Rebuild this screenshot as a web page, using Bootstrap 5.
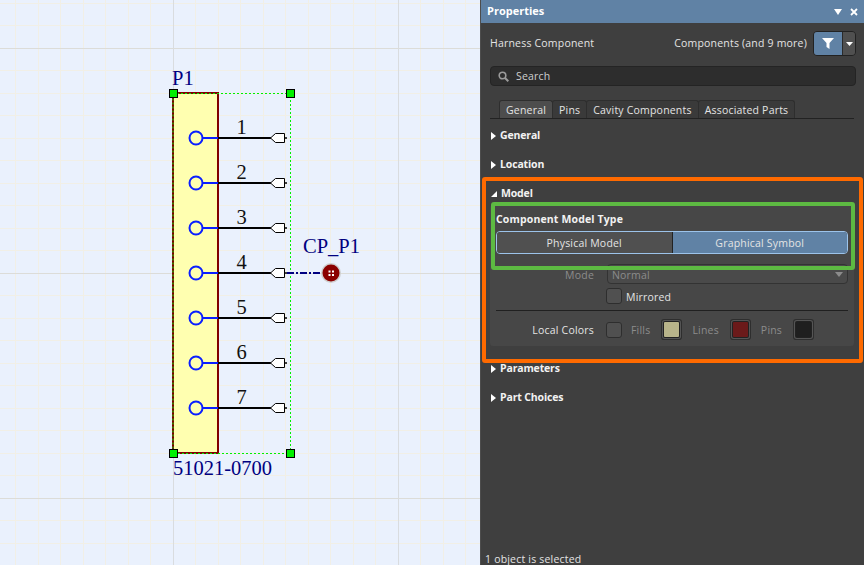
<!DOCTYPE html>
<html lang="en">
<head>
<meta charset="UTF-8">
<meta name="viewport" content="width=device-width, initial-scale=1.0">
<title>Properties</title>
<link href="https://cdn.jsdelivr.net/npm/bootstrap@5.3.0/dist/css/bootstrap.min.css" rel="stylesheet">
<style>
html, body { height: 565px; overflow: hidden; }
body { font-family: "Open Sans", "Noto Sans", sans-serif; font-size: 10.5px; letter-spacing: .2px; background: #eaf1fd; }
.sheet { width: 480px; height: 565px; flex: none; background-color: #eaf1fd;
  background-image:
    linear-gradient(90deg, #d9dcdf 1px, transparent 1px),
    linear-gradient(180deg, #dcdcd8 1px, transparent 1px),
    linear-gradient(90deg, #f1efe6 1px, transparent 1px, transparent 22px, #f1efe6 22px, #f1efe6 23px, transparent 23px),
    linear-gradient(180deg, #f1efe6 1px, transparent 1px, transparent 22px, #f1efe6 22px, #f1efe6 23px, transparent 23px);
  background-size: 225px 225px, 225px 225px, 45px 45px, 45px 45px;
  background-position: 173px 0, 0 48px, 173px 0, 0 48px; }
.sheet svg { display: block; }
.sch { font-family: "Liberation Serif", serif; letter-spacing: 0; }
.panel { width: 384px; height: 565px; flex: none; background: #3f3f3f; color: #e4e4e4; border-left: 1px solid #4d4d4d; position: relative; }
.panel-head { height: 23px; background: #6082a5; color: #fff; font-weight: 700; font-size: 11px; letter-spacing: 0; padding: 0 6px; }
.panel-body { padding: 0 8px 0 9px; }
.top-row { margin-top: 8px; }
.top-label { padding-top: 1px; }
.filter-wrap { gap: 6px; }
.filter-btn { width: 43px; height: 25px; border: 1px solid #222; border-radius: 4px; overflow: hidden; }
.filter-main { width: 28px; background: #6082a5; }
.filter-drop { flex: 1; background: #505050; border-left: 1px solid #2a2a2a; }
.search-box { height: 20px; margin-top: 10px; background: #2d2d2d; border: 1px solid #242424; border-radius: 4px; padding: 1px 0 0 7px; color: #cfcfcf; gap: 7px; }
.tabs-row { margin-top: 14px; margin-right: 2px; height: 19px; border-bottom: 1px solid #222; padding-left: 9px; }
.tab-item { padding: 0 6px; height: 18px; line-height: 18px; background: #3a3a3a; border: 1px solid #2e2e2e; border-bottom: 0; border-radius: 3px 3px 0 0; }
.tab-item + .tab-item { margin-left: -1px; }
.tab-item.on { background: #4d4d4d; }
.sect { font-weight: 700; letter-spacing: -.15px; color: #f2f2f2; height: 29px; padding-left: 1px; }
.sect-first { margin-top: 2px; }
.sect-open { height: 26px; padding-top: 4px; }
.model-box { background: #474747; border-radius: 3px; height: 141px; padding: 6px 6px 0; margin: 0 2px 8px 0; }
.box-title { height: 16px; line-height: 16px; font-weight: 700; color: #f2f2f2; letter-spacing: .15px; }
.fld-label { width: 98px; margin-right: 12px; text-align: right; color: #8c8c8c; flex: none; }
.fld-label.lit { color: #e4e4e4; }
.switcher { height: 23px; margin-top: 4px; line-height: 23px; border: 1px solid #9cc3ea; border-radius: 4px; overflow: hidden; }
.switcher div { flex: 1; }
.sw-off { background: #505050; border-right: 1px solid #222; }
.sw-on { background: #6082a5; }
.mode-row { margin-top: 10px; height: 20px; }
.mode-row .fld-label, .mirror-row span:last-child, .combo span { padding-top: 4px; }
.combo { flex: 1; height: 20px; margin-left: 1px; background: #4a4a4a; border: 1px solid #333; border-radius: 4px; color: #8c8c8c; padding: 0 4px; }
.mirror-row { margin-top: 4px; height: 16px; }
.chk { width: 16px; height: 16px; background: #505050; border: 1px solid #2e2e2e; border-radius: 3px; flex: none; }
.mirror-row .chk { margin-right: 4px; }
.swatch { width: 15px; height: 15px; margin: 3px; border-radius: 1px; box-shadow: 0 0 0 1px #222, 0 0 0 2px #555, 0 0 0 3px #2e2e2e; flex: none; }
.bg-fills { background: #b8b48a; }
.bg-lines { background: #6b1a1a; }
.bg-pins { background: #1f1f1f; }
.color-row { margin-top: 8px; height: 21px; }
.color-row .fld-label, .color-row .dim { padding-top: 3px; }
.color-row .dim { margin: 0 11px 0 9px; }
.color-row .dim.next { margin-left: 10px; }
.rule-line { height: 1px; background: #202020; margin-top: 6px; }
.dim { color: #8c8c8c; }
.mark-orange { position: absolute; left: 1px; top: 177px; width: 381px; height: 186px; border: 4px solid #ff6a00; border-radius: 3px; }
.mark-green { position: absolute; left: 10px; top: 202px; width: 364px; height: 68px; border: 4px solid #5dba42; border-radius: 3px; }
.status-text { position: absolute; left: 4px; bottom: -3px; }
</style>
</head>
<body class="d-flex">
<div class="sheet">
<svg width="480" height="565" viewBox="0 0 480 565">
  <rect x="173" y="93" width="45" height="360" fill="#ffffb0" stroke="#800000" stroke-width="2"/>
  <path d="M173 93.500H290.500V453.500H173Z" fill="none" stroke="#00f000" stroke-dasharray="2 2"/>
  <g id="pins"></g>
  <path d="M287 273H325" stroke="#000080" stroke-width="2" stroke-dasharray="7 2 2 2"/>
  <circle cx="331" cy="273" r="10" fill="#cfcfcf"/>
  <circle cx="331" cy="273" r="8.500" fill="#8b0000"/>
  <path d="M328.500 270.500h2v2h-2zM332 270.500h2v2h-2zM328.500 274h2v2h-2zM332 274h2v2h-2z" fill="#fff"/>
  <g fill="#00f000" stroke="#000" stroke-width="1">
    <rect x="169.500" y="89.500" width="8" height="8"/><rect x="286.500" y="89.500" width="8" height="8"/>
    <rect x="169.500" y="449.500" width="8" height="8"/><rect x="286.500" y="449.500" width="8" height="8"/>
  </g>
  <g class="sch" font-size="20.500" fill="#000080">
    <text x="172" y="85">P1</text>
    <text x="303" y="253">CP_P1</text>
    <text x="173" y="475">51021-0700</text>
  </g>
</svg>
</div>
<div class="panel">
  <div class="panel-head d-flex align-items-center justify-content-between">
    <span>Properties</span>
    <span class="d-flex align-items-center gap-2">
      <svg width="8" height="6" viewBox="0 0 8 6"><path d="M0 0H8L4 6Z" fill="#fff"/></svg>
      <svg width="8" height="8" viewBox="0 0 8 8"><path d="M1 1L7 7M7 1L1 7" stroke="#fff" stroke-width="1.800"/></svg>
    </span>
  </div>
  <div class="panel-body">
    <div class="top-row d-flex align-items-center justify-content-between">
      <span class="top-label">Harness Component</span>
      <span class="filter-wrap d-flex align-items-center">
        <span class="top-label">Components (and 9 more)</span>
        <span class="filter-btn d-flex">
          <span class="filter-main d-flex align-items-center justify-content-center">
            <svg width="12" height="11" viewBox="0 0 12 11"><path d="M0 0H12L7.500 5V11L4.500 9V5Z" fill="#fff"/></svg>
          </span>
          <span class="filter-drop d-flex align-items-center justify-content-center">
            <svg width="7" height="4" viewBox="0 0 7 4"><path d="M0 0H7L3.500 4Z" fill="#fff"/></svg>
          </span>
        </span>
      </span>
    </div>
    <div class="search-box d-flex align-items-center">
      <svg width="11" height="11" viewBox="0 0 11 11"><circle cx="4.500" cy="4.500" r="3.300" fill="none" stroke="#9a9a9a" stroke-width="1.600"/><path d="M7 7L10.300 10.300" stroke="#9a9a9a" stroke-width="2"/></svg>
      <span>Search</span>
    </div>
    <div class="tabs-row d-flex align-items-end">
      <div class="tab-item on">General</div>
      <div class="tab-item">Pins</div>
      <div class="tab-item">Cavity Components</div>
      <div class="tab-item">Associated Parts</div>
    </div>
    <div class="sect sect-first d-flex align-items-center gap-1"><svg width="5" height="8" viewBox="0 0 5 8"><path d="M0 0L5 4L0 8Z" fill="#fff"/></svg>General</div>
    <div class="sect d-flex align-items-center gap-1"><svg width="5" height="8" viewBox="0 0 5 8"><path d="M0 0L5 4L0 8Z" fill="#fff"/></svg>Location</div>
    <div class="sect sect-open d-flex align-items-center gap-1"><svg width="6" height="6" viewBox="0 0 6 6"><path d="M6 0V6H0Z" fill="#fff"/></svg>Model</div>
    <div class="model-box">
      <div class="box-title">Component Model Type</div>
      <div class="switcher d-flex text-center">
        <div class="sw-off">Physical Model</div>
        <div class="sw-on">Graphical Symbol</div>
      </div>
      <div class="mode-row d-flex align-items-center">
        <span class="fld-label">Mode</span>
        <span class="combo d-flex align-items-center justify-content-between">
          <span>Normal</span>
          <svg width="8" height="5" viewBox="0 0 8 5"><path d="M0 0H8L4 5Z" fill="#8c8c8c"/></svg>
        </span>
      </div>
      <div class="mirror-row d-flex align-items-center">
        <span class="fld-label"></span>
        <span class="chk"></span>
        <span>Mirrored</span>
      </div>
      <div class="rule-line"></div>
      <div class="color-row d-flex align-items-center">
        <span class="fld-label lit">Local Colors</span>
        <span class="chk"></span>
        <span class="dim">Fills</span>
        <span class="swatch bg-fills"></span>
        <span class="dim next">Lines</span>
        <span class="swatch bg-lines"></span>
        <span class="dim next">Pins</span>
        <span class="swatch bg-pins"></span>
      </div>
    </div>
    <div class="sect d-flex align-items-center gap-1"><svg width="5" height="8" viewBox="0 0 5 8"><path d="M0 0L5 4L0 8Z" fill="#fff"/></svg>Parameters</div>
    <div class="sect d-flex align-items-center gap-1"><svg width="5" height="8" viewBox="0 0 5 8"><path d="M0 0L5 4L0 8Z" fill="#fff"/></svg>Part Choices</div>
  </div>
  <div class="mark-orange"></div>
  <div class="mark-green"></div>
  <span class="status-text">1 object is selected</span>
</div>
<script>
  // pin rows of the connector
  var pins = document.getElementById('pins');
  var out = '';
  for (var i = 0; i < 7; i++) {
    var y = 138 + i * 45;
    out += '<circle cx="196" cy="' + y + '" r="6.500" fill="none" stroke="#0a1eff" stroke-width="2"/>';
    out += '<path d="M202.500 ' + y + 'H218" stroke="#0a1eff" stroke-width="2"/>';
    out += '<path d="M218 ' + y + 'H271" stroke="#000" stroke-width="2"/>';
    out += '<path d="M270.500 ' + y + 'L275.500 ' + (y - 4.500) + 'H284.500V' + (y + 4.500) + 'H275.500Z" fill="#fff" stroke="#000"/>';
    out += '<path d="M284 ' + y + 'H287" stroke="#000" stroke-width="1.500"/>';
    out += '<text class="sch" x="241.500" y="' + (y - 4) + '" font-size="20.500" text-anchor="middle" fill="#111">' + (i + 1) + '</text>';
  }
  pins.innerHTML = out;
</script>
<script src="https://cdn.jsdelivr.net/npm/bootstrap@5.3.0/dist/js/bootstrap.bundle.min.js"></script>
</body>
</html>
